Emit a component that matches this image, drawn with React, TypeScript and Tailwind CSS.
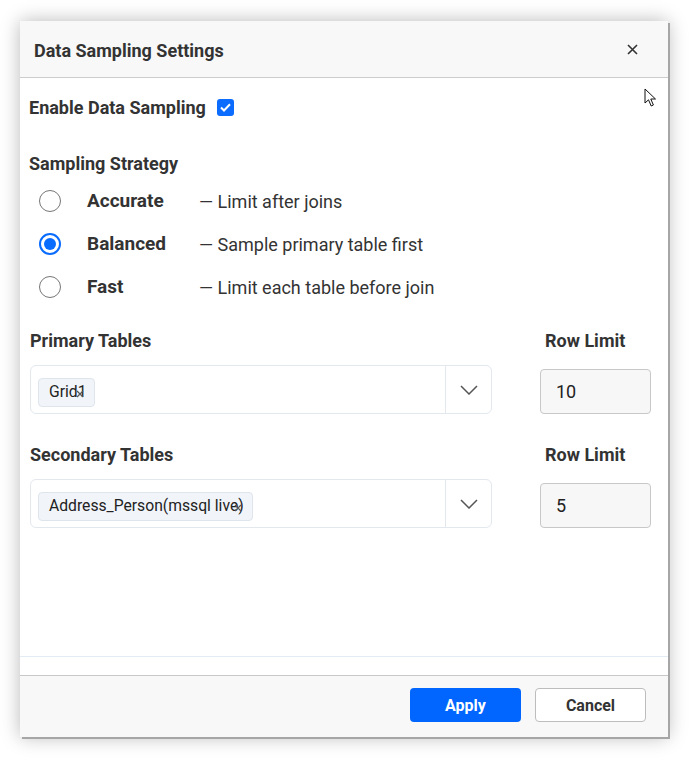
import React, { useState } from 'react';

const font = { fontFamily: 'Roboto, "Noto Sans", sans-serif' };

function Radio({ checked }: { checked: boolean }) {
  return checked ? (
    <span className="flex h-[22px] w-[22px] items-center justify-center rounded-full border-2 border-[#0a6cff] bg-white">
      <span className="h-[12px] w-[12px] rounded-full bg-[#0a6cff]" />
    </span>
  ) : (
    <span className="h-[22px] w-[22px] rounded-full border-[1.5px] border-[#767676] bg-white" />
  );
}

function Chip({ label }: { label: string }) {
  return (
    <span className="relative inline-flex h-[29px] items-center rounded-[4px] border border-[#dfe5ec] bg-[#f1f4f9] pl-[10px] pr-[8px] text-[15.7px] text-[#222]">
      {label}
      <svg className="absolute right-[10px] top-[11px]" width="8" height="8" viewBox="0 0 8 8">
        <path d="M1 1L7 7M7 1L1 7" stroke="#555" strokeWidth="1.2" />
      </svg>
    </span>
  );
}

function TableRow({ title, chip, limit }: { title: string; chip: string; limit: string }) {
  return (
    <div className="flex items-end gap-[48px]">
      <div className="flex w-[462px] flex-col">
        <div className="mb-[11px] text-[18px] font-bold text-[#333]">{title}</div>
        <div className="flex h-[49px] items-stretch rounded-[6px] border border-[#e3e8ee] bg-white">
          <div className="flex flex-1 items-center pl-[7px] pt-[5px]">
            <Chip label={chip} />
          </div>
          <div className="flex w-[46px] items-center justify-center border-l border-[#e3e8ee]">
            <svg width="18" height="10" viewBox="0 0 18 10">
              <path d="M1 1L9 9L17 1" fill="none" stroke="#555" strokeWidth="1.5" />
            </svg>
          </div>
        </div>
      </div>
      <div className="flex flex-col">
        <div className="mb-[15px] pl-[5px] text-[18px] font-bold text-[#333]">Row Limit</div>
        <div className="flex h-[45px] w-[111px] items-center rounded-[4px] border border-[#c8c8c8] bg-[#f7f7f7] pl-[15px] text-[18px] text-[#222]">
          {limit}
        </div>
      </div>
    </div>
  );
}

export default function App() {
  const [strategy] = useState('Balanced');
  const options = [
    { name: 'Accurate', desc: '— Limit after joins' },
    { name: 'Balanced', desc: '— Sample primary table first' },
    { name: 'Fast', desc: '— Limit each table before join' },
  ];

  return (
    <div className="h-[759px] w-[689px] bg-white pl-[20px] pt-[21px]" style={font}>
      <div className="relative flex h-[716px] w-[648px] flex-col bg-white shadow-[2px_2px_0_#a6a6a6,0_0_18px_rgba(0,0,0,0.28)]">
        <div className="flex h-[57px] items-center justify-between border-b border-[#cccccc] bg-[#f8f8f8] pl-[14px] pr-[30px]">
          <span className="pt-[2px] text-[18px] font-bold text-[#333]">Data Sampling Settings</span>
          <svg width="11" height="11" viewBox="0 0 11 11">
            <path d="M1 1L10 10M10 1L1 10" stroke="#333" strokeWidth="1.6" />
          </svg>
        </div>

        <div className="flex flex-1 flex-col border-b border-[#e3ecf5] pl-[9px] pt-[16px]">
          <div className="flex items-center gap-[11px]">
            <span className="text-[18px] font-bold text-[#333]">Enable Data Sampling</span>
            <span className="flex h-[17px] w-[17px] items-center justify-center rounded-[3px] bg-[#0b6cff]">
              <svg width="11" height="9" viewBox="0 0 11 9">
                <path d="M1 4.5L4 7.5L10 1.2" fill="none" stroke="#fff" strokeWidth="2" />
              </svg>
            </span>
          </div>

          <div className="mt-[29px] text-[18px] font-bold text-[#333]">Sampling Strategy</div>

          <div className="mt-[13px] flex flex-col gap-[21px] pl-[10px]">
            {options.map((o) => (
              <div key={o.name} className="flex h-[22px] items-center">
                <Radio checked={strategy === o.name} />
                <span className="ml-[26px] w-[112px] text-[19px] font-bold text-[#333]">{o.name}</span>
                <span className="text-[18px] text-[#333]">{o.desc}</span>
              </div>
            ))}
          </div>

          <div className="mt-[29px] flex flex-col gap-[27px] pl-[1px]">
            <TableRow title="Primary Tables" chip="Grid1" limit="10" />
            <TableRow title="Secondary Tables" chip="Address_Person(mssql live)" limit="5" />
          </div>
        </div>

        <div className="h-[19px] border-b border-[#c8c8c8]" />

        <div className="flex h-[61px] items-start justify-end gap-[14px] bg-[#f8f8f8] pr-[22px] pt-[12px]">
          <button className="h-[34px] w-[111px] rounded-[4px] bg-[#0066ff] pt-[2px] text-[16px] font-bold text-white">
            Apply
          </button>
          <button className="h-[34px] w-[111px] rounded-[4px] border border-[#bdbdbd] bg-white pt-[2px] text-[16px] font-bold text-[#333]">
            Cancel
          </button>
        </div>

        <svg className="absolute left-[624px] top-[67px]" width="13" height="20" viewBox="0 0 13 20">
          <path d="M1 1L1 15L4.5 11.8L7.2 18L9.4 17L6.8 11L11.5 11Z" fill="#fff" stroke="#111" strokeWidth="1" strokeLinejoin="round" />
        </svg>
      </div>
    </div>
  );
}
